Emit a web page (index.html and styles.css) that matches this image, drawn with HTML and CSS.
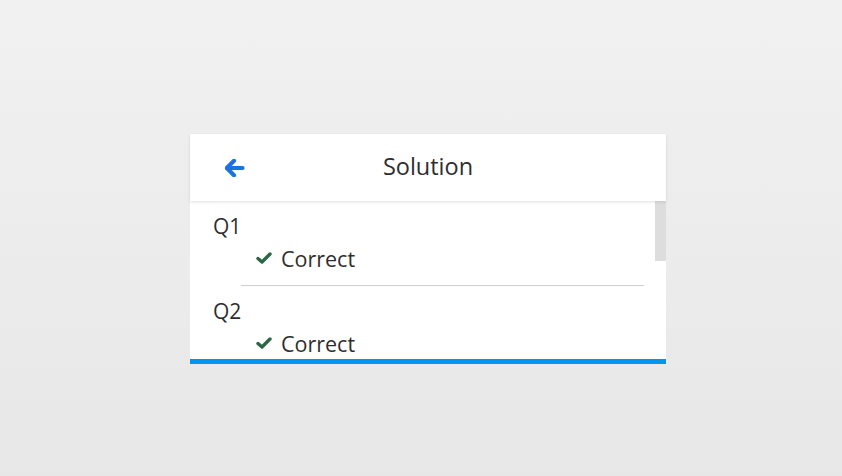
FILE: index.html
```html
<!DOCTYPE html>
<html>
<head>
<meta charset="utf-8">
<link rel="stylesheet" href="styles.css">
</head>
<body>
<div class="stage">
  <div class="card">
    <div class="header">
      <span class="back">
        <svg width="20" height="18" viewBox="0 0 20 18"><path d="M9 1.8 L1.8 9 L9 16.2" fill="none" stroke="#1b72e2" stroke-width="4.2" stroke-linecap="round" stroke-linejoin="round"/><path d="M2.5 9 H17.5" stroke="#1b72e2" stroke-width="4.2" stroke-linecap="round"/></svg>
      </span>
      <span class="title">Solution</span>
    </div>
    <div class="body">
      <div class="list">
        <div class="item">
          <div class="q">Q1</div>
          <div class="res"><svg class="check" width="16" height="12" viewBox="0 0 16 12"><path d="M2 6.5 L6 10 L14 2" fill="none" stroke="#2a6647" stroke-width="3.4" stroke-linecap="round" stroke-linejoin="round"/></svg>Correct</div>
        </div>
        <div class="item">
          <div class="q">Q2</div>
          <div class="res"><svg class="check" width="16" height="12" viewBox="0 0 16 12"><path d="M2 6.5 L6 10 L14 2" fill="none" stroke="#2a6647" stroke-width="3.4" stroke-linecap="round" stroke-linejoin="round"/></svg>Correct</div>
        </div>
      </div>
      <div class="scrollbar"><div class="thumb"></div></div>
    </div>
    <div class="bar"></div>
  </div>
</div>
</body>
</html>
```
FILE: styles.css
```css
html, body { margin: 0; padding: 0; }
body {
  width: 842px; height: 476px; overflow: hidden;
  background: linear-gradient(#f1f1f1, #e8e7e8);
  font-family: "Open Sans", "Noto Sans", sans-serif;
  color: #2e2e2e;
}
.stage { padding-top: 134px; padding-left: 190px; }
.card { width: 476px; background: #fff; }
.header {
  height: 67px; position: relative; display: flex; align-items: center; justify-content: center;
  box-shadow: 0 1px 3px rgba(0,0,0,0.12);
  z-index: 1;
}
.back { position: absolute; left: 35px; top: 25px; display: flex; }
.title { font-size: 23.5px; margin-top: -4px; }
.body { height: 158px; display: flex; overflow: hidden; }
.list { flex: 1; }
.item { padding-left: 23px; }
.q { font-size: 21px; line-height: 26px; padding-top: 12px; }
.res { font-size: 21.5px; line-height: 26px; padding-left: 43px; display: flex; align-items: center; padding-top: 7px; padding-bottom: 13px; }
.check { margin-right: 9px; margin-top: -3px; }
.item:first-child .res { border-bottom: 1px solid #cfcfcf; margin-left: 28px; padding-left: 15px; margin-right: 11px; }
.scrollbar { width: 11px; }
.thumb { height: 60px; background: #dddddd; }
.bar { height: 5px; background: #0096f0; }
```
